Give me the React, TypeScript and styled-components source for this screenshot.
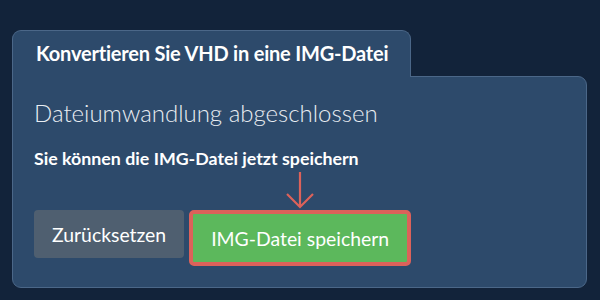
import React from 'react';
import { styled, createGlobalStyle } from 'styled-components';

const GlobalStyle = createGlobalStyle`
  html, body {
    margin: 0;
    padding: 0;
    background: #12233a;
    font-family: Lato, "Open Sans", "Liberation Sans", sans-serif;
  }
`;

const Page = styled.div`
  width: 600px;
  height: 300px;
  box-sizing: border-box;
  padding: 30px 13px 0 12px;
`;

const Tab = styled.div`
  position: relative;
  z-index: 1;
  width: 399px;
  height: 47px;
  box-sizing: border-box;
  margin-bottom: -1px;
  padding: 10px 0 0 23px;
  background: #2d4a6b;
  border: 1px solid #4b6788;
  border-bottom: none;
  border-radius: 9px 9px 0 0;
  color: #ffffff;
  font-size: 20px;
  font-weight: 700;
  line-height: 24px;
  letter-spacing: -0.2px;
`;

const Panel = styled.div`
  height: 212px;
  box-sizing: border-box;
  padding: 21px 21px 0 21px;
  background: #2d4a6b;
  border: 1px solid #4b6788;
  border-radius: 0 9px 9px 9px;
`;

const Heading = styled.h2`
  margin: 0;
  color: #e9edf2;
  font-size: 24px;
  font-weight: 300;
  line-height: 30px;
`;

const Note = styled.p`
  margin: 19px 0 0 0;
  color: #ffffff;
  font-size: 17.8px;
  font-weight: 700;
  line-height: 22px;
`;

const Actions = styled.div`
  display: flex;
  align-items: flex-start;
  gap: 5px;
  margin-top: 41px;
`;

const Button = styled.button<{ $primary?: boolean }>`
  height: ${p => (p.$primary ? '56px' : '48px')};
  box-sizing: border-box;
  padding: 0 18px;
  border: ${p => (p.$primary ? '4px solid #dc625a' : 'none')};
  border-radius: ${p => (p.$primary ? '5px' : '4px')};
  background: ${p => (p.$primary ? '#5cb85c' : '#4f5f70')};
  color: #ffffff;
  font-family: inherit;
  font-size: 19.4px;
  font-weight: 400;
`;

const PrimaryWrap = styled.div`
  position: relative;
`;

const Pointer = styled.svg`
  position: absolute;
  left: 97px;
  top: -40px;
`;

export default function App() {
  return (
    <>
      <GlobalStyle />
      <Page>
        <Tab>Konvertieren Sie VHD in eine IMG-Datei</Tab>
        <Panel>
          <Heading>Dateiumwandlung abgeschlossen</Heading>
          <Note>Sie können die IMG-Datei jetzt speichern</Note>
          <Actions>
            <Button>Zurücksetzen</Button>
            <PrimaryWrap>
              <Pointer width="30" height="40" viewBox="0 0 30 40">
                <path d="M14 2 V36 M1 24 L14 37 L27 24" fill="none" stroke="#dc625a" strokeWidth="2.2" />
              </Pointer>
              <Button $primary>IMG-Datei speichern</Button>
            </PrimaryWrap>
          </Actions>
        </Panel>
      </Page>
    </>
  );
}
